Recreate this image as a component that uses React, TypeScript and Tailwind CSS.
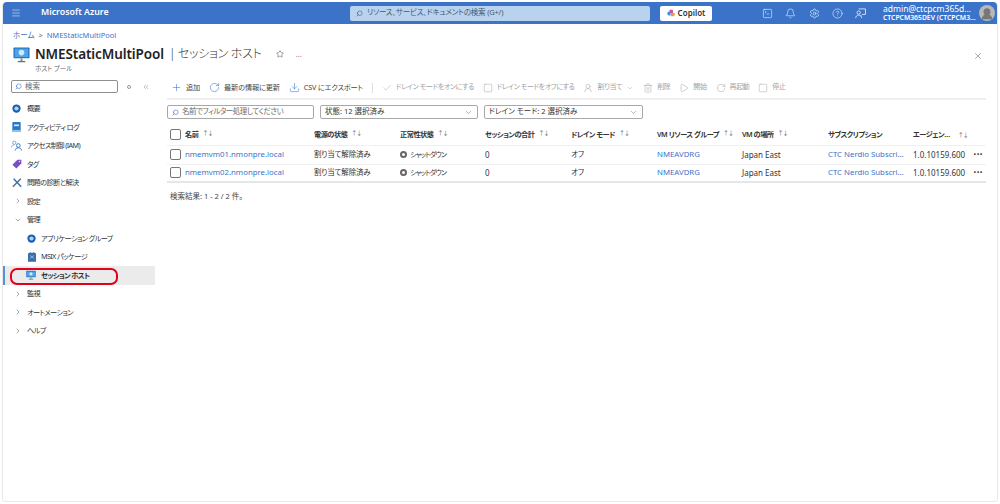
import { Bell, Check, ChevronDown, ChevronRight, ChevronsLeft, CircleHelp, Download, Menu, Play, Plus, RotateCw, Search, Settings, Square, SquareTerminal, Star, Trash2, UserRound, X } from 'lucide-react';
import * as React from 'react';

const FONT = "font-['Noto_Sans','Noto_Sans_CJK_JP',sans-serif] [font-feature-settings:'palt']";

function MonitorIcon({ big }: { big?: boolean }) {
  const size = big ? 'h-[17px] w-[17px]' : 'h-[10px] w-[10px]';
  return (
    <svg viewBox="0 0 18 18" className={size}>
      <rect x="0.5" y="1.5" width="17" height="11.5" rx="0.8" fill="#1f73c9" />
      <rect x="1.8" y="2.8" width="14.4" height="9" fill="#4da3e8" />
      <circle cx="9" cy="7" r="3" fill="#cfeafc" />
      <rect x="8" y="13" width="2" height="3" fill="#8a8a8a" />
      <rect x="5" y="15.8" width="8" height="1.4" fill="#6f6f6f" />
    </svg>
  );
}

function RingIcon({ color }: { color: string }) {
  return (
    <svg viewBox="0 0 12 12" className="h-[9px] w-[9px]">
      <circle cx="6" cy="6" r="5.5" fill={color} />
      <circle cx="6" cy="6" r="2.8" fill="#a8d8f5" />
    </svg>
  );
}

function SideIcon({ name }: { name: string }) {
  if (name === 'overview') return <RingIcon color="#1b5fb0" />;
  if (name === 'log') {
    return (
      <svg viewBox="0 0 10 12" className="h-[10px] w-[9px]">
        <rect width="10" height="12" rx="1" fill="#2a77c4" />
        <rect x="2" y="3" width="6" height="2" fill="#d7ebfa" />
        <rect y="9.5" width="10" height="2.5" fill="#8fc2ec" />
      </svg>
    );
  }
  if (name === 'iam') {
    return (
      <svg viewBox="0 0 12 12" className="h-[11px] w-[11px]" fill="none" strokeWidth="1">
        <circle cx="3.6" cy="3" r="1.8" stroke="#7f9fc4" />
        <path d="M0.6 8c0-2 1.4-2.8 3-2.8" stroke="#7f9fc4" />
        <circle cx="8" cy="6" r="2" stroke="#2a77c4" />
        <path d="M4.6 11.5c0-2 1.4-3 3.4-3s3.4 1 3.4 3" stroke="#2a77c4" />
      </svg>
    );
  }
  if (name === 'tag') {
    return (
      <svg viewBox="0 0 12 12" className="h-[10px] w-[10px]">
        <path d="M6.5 0.8h4.7v4.7l-6 6-4.7-4.7z" fill="#7a4fc4" />
        <circle cx="9" cy="3" r="0.9" fill="#e6dcf7" />
      </svg>
    );
  }
  if (name === 'tools') {
    return (
      <svg viewBox="0 0 12 12" className="h-[10px] w-[10px]" fill="none">
        <path d="M2 1l9 9.5" stroke="#2a77c4" strokeWidth="1.8" />
        <path d="M10.5 1L1 10.5" stroke="#5b6f86" strokeWidth="1.8" />
      </svg>
    );
  }
  if (name === 'app') return <RingIcon color="#1b5fb0" />;
  if (name === 'msix') {
    return (
      <svg viewBox="0 0 10 12" className="h-[10px] w-[8px]">
        <path d="M0 1.5L3 0l2 1 2-1 3 1.5V12H0z" fill="#3a6ea8" />
        <path d="M2.5 4l5 4M7.5 4l-5 4" stroke="#b8d3ec" strokeWidth="0.8" />
      </svg>
    );
  }
  return <MonitorIcon />;
}

const sideItems: { label: string; icon?: string; chevron?: 'right' | 'down'; child?: boolean; active?: boolean }[] = [
  { label: '概要', icon: 'overview' },
  { label: 'アクティビティ ログ', icon: 'log' },
  { label: 'アクセス制御 (IAM)', icon: 'iam' },
  { label: 'タグ', icon: 'tag' },
  { label: '問題の診断と解決', icon: 'tools' },
  { label: '設定', chevron: 'right' },
  { label: '管理', chevron: 'down' },
  { label: 'アプリケーション グループ', icon: 'app', child: true },
  { label: 'MSIX パッケージ', icon: 'msix', child: true },
  { label: 'セッション ホスト', icon: 'host', child: true, active: true },
  { label: '監視', chevron: 'right' },
  { label: 'オートメーション', chevron: 'right' },
  { label: 'ヘルプ', chevron: 'right' },
];

function Sidebar() {
  return (
    <aside className="w-[152px] shrink-0">
      <div className="flex items-center pl-[8px]">
        <div className="flex h-[13px] w-[107px] items-center gap-[3px] rounded-[2px] border border-[#8f8f8f] px-[3px] text-[7.5px] text-[#6b6b6b]">
          <Search className="h-[7px] w-[7px] scale-x-[-1] text-[#3b73c9]" />
          検索
        </div>
        <span className="ml-[9px] h-[4px] w-[4px] rounded-full border border-[#999]" />
        <ChevronsLeft className="ml-[11px] h-[8px] w-[8px] text-[#888]" strokeWidth={1.5} />
      </div>
      <nav className="mt-[6.5px]">
        {sideItems.map((item) => (
          <div
            key={item.label}
            className={`flex h-[18.5px] items-center text-[7.2px] tracking-[-0.6px] text-[#333] ${item.active ? 'border-l-2 border-[#5b8fd6] bg-[#ebebeb] font-semibold text-[#222]' : ''}`}
          >
            {item.chevron ? (
              <span className="flex w-[24px] justify-end pr-[5px]">
                {item.chevron === 'right' ? (
                  <ChevronRight className="h-[8px] w-[8px] text-[#555]" strokeWidth={1.5} />
                ) : (
                  <ChevronDown className="h-[8px] w-[8px] text-[#555]" strokeWidth={1.5} />
                )}
              </span>
            ) : (
              <span className={`flex ${item.child ? (item.active ? 'w-[31px] justify-end' : 'w-[33px] justify-end') : 'w-[24px] justify-center pl-[6px] pr-[3px]'}`}>
                {item.icon && <SideIcon name={item.icon} />}
              </span>
            )}
            <span className={item.child ? 'ml-[5px]' : ''}>{item.label}</span>
          </div>
        ))}
      </nav>
    </aside>
  );
}

function ToolButton({ icon, label, disabled, caret }: { icon: React.ReactNode; label: string; disabled?: boolean; caret?: boolean }) {
  return (
    <div className={`flex shrink-0 items-center gap-[4px] whitespace-nowrap ${disabled ? 'text-[7px] tracking-[-0.4px] text-[#a3a3a3]' : 'text-[7.2px] tracking-[-0.15px] text-[#444]'}`}>
      {icon}
      {label}
      {caret && <ChevronDown className="h-[8px] w-[8px]" strokeWidth={1.3} />}
    </div>
  );
}

function Toolbar() {
  const blue = 'h-[11px] w-[11px] text-[#2f73c8]';
  const gray = 'h-[10px] w-[10px] text-[#a3a3a3]';
  return (
    <div className="flex h-[20px] items-center border-b-2 border-[#efefef] pb-[3px] pl-[4px]">
      <div className="flex items-center gap-[9px]">
        <ToolButton icon={<Plus className={blue} strokeWidth={1.2} />} label="追加" />
        <ToolButton icon={<RotateCw className={blue} strokeWidth={1.2} />} label="最新の情報に更新" />
        <ToolButton icon={<Download className={blue} strokeWidth={1.2} />} label="CSV にエクスポート" />
        <span className="h-[10px] w-px bg-[#ddd]" />
      </div>
      <div className="ml-[9px] flex items-center gap-[9px]">
        <ToolButton disabled icon={<Check className={gray} strokeWidth={1.2} />} label="ドレイン モードをオンにする" />
        <ToolButton disabled icon={<Square className={gray} strokeWidth={1.2} />} label="ドレイン モードをオフにする" />
        <ToolButton disabled caret icon={<UserRound className={gray} strokeWidth={1.2} />} label="割り当て" />
        <ToolButton disabled icon={<Trash2 className={gray} strokeWidth={1.2} />} label="削除" />
        <ToolButton disabled icon={<Play className={gray} strokeWidth={1.2} />} label="開始" />
        <ToolButton disabled icon={<RotateCw className={gray} strokeWidth={1.2} />} label="再起動" />
        <ToolButton disabled icon={<Square className={gray} strokeWidth={1.2} />} label="停止" />
      </div>
    </div>
  );
}

function Filters() {
  const box = 'flex h-[14px] items-center rounded-[2px] border border-[#a8a8a8] px-[4px] text-[7.5px]';
  return (
    <div className="mt-[5px] flex">
      <div className={`${box} w-[147px] gap-[3px] tracking-[-0.5px] text-[#6b6b6b]`}>
        <Search className="h-[7px] w-[7px] scale-x-[-1] text-[#3b73c9]" />
        名前でフィルター処理してください
      </div>
      <div className={`${box} ml-[6px] w-[158px] justify-between text-[#333]`}>
        状態: 12 選択済み
        <ChevronDown className="h-[9px] w-[9px] text-[#555]" strokeWidth={1.2} />
      </div>
      <div className={`${box} ml-[6px] w-[159px] justify-between text-[#333]`}>
        ドレイン モード: 2 選択済み
        <ChevronDown className="h-[9px] w-[9px] text-[#555]" strokeWidth={1.2} />
      </div>
    </div>
  );
}

const GRID = 'grid grid-cols-[147px_86px_85px_86px_86px_85px_86px_85px_74px] items-center';

function Sort() {
  return <span className="ml-[4px] text-[6px] font-normal tracking-[-1px] text-[#666]">↑↓</span>;
}

function Head({ label, sort = true }: { label: string; sort?: boolean }) {
  return (
    <div className="flex items-center whitespace-nowrap">
      {label}
      {sort && <Sort />}
    </div>
  );
}

function CheckBox() {
  return <span className="ml-[3px] mr-[4px] h-[11px] w-[11px] shrink-0 rounded-[2px] border border-[#777]" />;
}

const LINK = 'text-[#3b73c9] text-[7.8px]';

function Row({ name, last }: { name: string; last?: boolean }) {
  return (
    <div className={`${GRID} h-[18.5px] whitespace-nowrap border-b text-[7.5px] text-[#333] ${last ? 'border-b-2 border-[#e6e6e6]' : 'border-[#f0f0f0]'}`}>
      <div className="flex items-center">
        <CheckBox />
        <span className={LINK}>{name}</span>
      </div>
      <div className="tracking-[-0.2px]">割り当て解除済み</div>
      <div className="flex items-center gap-[3px] text-[7px] tracking-[-0.8px]">
        <span className="h-[7px] w-[7px] rounded-full border-2 border-[#666]" />
        シャットダウン
      </div>
      <div className="text-[8px]">0</div>
      <div>オフ</div>
      <div className={LINK}>NMEAVDRG</div>
      <div className="text-[8px]">Japan East</div>
      <div className={LINK}>CTC Nerdio Subscri…</div>
      <div className="flex items-center justify-between pr-[4px] text-[8px]">
        1.0.10159.600
        <span className="text-[7px] tracking-[0.5px] text-[#333]">•••</span>
      </div>
    </div>
  );
}

function HostTable() {
  return (
    <div className="mt-[4px]">
      <div className={`${GRID} h-[23px] border-b border-[#f0f0f0] text-[7.2px] font-semibold tracking-[-0.5px] text-[#333]`}>
        <div className="flex items-center">
          <CheckBox />
          <Head label="名前" />
        </div>
        <Head label="電源の状態" />
        <Head label="正常性状態" />
        <Head label="セッションの合計" />
        <Head label="ドレイン モード" />
        <Head label="VM リソース グループ" />
        <Head label="VM の場所" />
        <Head label="サブスクリプション" sort={false} />
        <div className="flex items-center whitespace-nowrap">
          エージェン…
          <span className="ml-[4px]"><Sort /></span>
        </div>
      </div>
      <Row name="nmemvm01.nmonpre.local" />
      <Row name="nmemvm02.nmonpre.local" last />
      <p className="mt-[8px] pl-[3px] text-[7.5px] text-[#444]">検索結果: 1 - 2 / 2 件。</p>
    </div>
  );
}

function TopBar() {
  const icon = 'h-[11px] w-[11px] text-white';
  return (
    <header className="flex h-[22px] shrink-0 items-center rounded-t-[4px] bg-[#3b73c9] text-white">
      <Menu className="ml-[8px] h-[10px] w-[10px]" strokeWidth={1.2} />
      <span className="ml-[20px] w-[309px] whitespace-nowrap text-[8.8px] font-semibold">Microsoft Azure</span>
      <div className="flex h-[15px] w-[300px] items-center gap-[4px] rounded-[2px] bg-[#b9d3ef] px-[6px] text-[7.5px] tracking-[-0.2px] text-[#46586e]">
        <Search className="h-[7px] w-[7px] scale-x-[-1]" />
        リソース、サービス、ドキュメントの検索 (G+/)
      </div>
      <div className="ml-[10px] flex h-[15px] w-[52px] items-center justify-center gap-[3px] rounded-[2px] bg-white text-[8px] font-semibold text-[#333]">
        <svg viewBox="0 0 10 10" className="h-[8px] w-[8px]">
          <path d="M0.5 5a2 2 0 012-2h2v5h-2a2 2 0 01-2-2z" fill="#3b8fe0" />
          <path d="M3 0.8h3a1.5 1.5 0 011.5 1.5V5h-4z" fill="#d04fa0" />
          <path d="M5 5h4.5v1.5A2 2 0 017.5 9H5z" fill="#f0a030" />
        </svg>
        Copilot
      </div>
      <div className="ml-[50px] flex w-[104px] items-center justify-between">
        <SquareTerminal className={icon} strokeWidth={1.2} />
        <Bell className={icon} strokeWidth={1.2} />
        <Settings className={icon} strokeWidth={1.2} />
        <CircleHelp className={icon} strokeWidth={1.2} />
        <svg viewBox="0 0 12 12" className={icon} fill="none" stroke="currentColor" strokeWidth="0.8">
          <circle cx="4" cy="5" r="1.8" />
          <path d="M0.8 11c0-2 1.4-3.2 3.2-3.2s3.2 1.2 3.2 3.2" />
          <path d="M4 1h7.4v6H8l-1.4 1.4" />
        </svg>
      </div>
      <div className="ml-[17px] w-[94px] whitespace-nowrap leading-[9px]">
        <div className="text-[8.5px]">admin@ctcpcm365d…</div>
        <div className="text-[6.8px] font-semibold">CTCPCM365DEV (CTCPCM3…</div>
      </div>
      <div className="ml-[2px] flex h-[16px] w-[16px] items-end justify-center overflow-hidden rounded-full bg-[#b8b8b8]">
        <UserRound className="h-[14px] w-[14px] text-[#777]" fill="#777" />
      </div>
    </header>
  );
}

export default function App(): React.ReactElement {
  return (
    <div className={`${FONT} relative h-[504px] w-[1000px] overflow-hidden bg-white p-[2px]`}>
      <div className="flex h-full flex-col rounded-[4px] border-b border-r border-l border-[#e8e8e8]">
        <TopBar />
        <p className="mt-[5px] pl-[10px] text-[7.5px] leading-[12px] text-[#3b73c9]">
          ホーム <span className="px-[2px] text-[#666]">&gt;</span> NMEStaticMultiPool
        </p>
        <div className="mt-[2px] flex items-start pl-[10px] pr-[13px]">
          <div className="mt-[3px]"><MonitorIcon big /></div>
          <div className="ml-[5px]">
            <div className="flex h-[22px] items-center whitespace-nowrap">
              <h1 className="text-[13.5px] font-semibold tracking-[-0.1px] text-[#222]">NMEStaticMultiPool</h1>
              <span className="ml-[5px] text-[12px] font-light tracking-[-0.3px] text-[#333]">| セッション ホスト</span>
              <Star className="ml-[14px] h-[8px] w-[8px] text-[#444]" strokeWidth={1.5} />
              <span className="ml-[12px] text-[8px] tracking-[0.5px] text-[#888]">…</span>
            </div>
            <p className="-mt-[1px] text-[6.5px] leading-[9px] text-[#666]">ホスト プール</p>
          </div>
          <X className="ml-auto mr-[1px] mt-[8px] h-[10px] w-[10px] text-[#555]" strokeWidth={1.2} />
        </div>
        <div className="mt-[7px] flex min-h-0 flex-1 pr-[11px]">
          <Sidebar />
          <main className="ml-[12px] min-w-0 flex-1">
            <Toolbar />
            <Filters />
            <HostTable />
          </main>
        </div>
      </div>
      {/* red hand-drawn highlight around the session host item */}
      <div className="absolute left-[10px] top-[268px] h-[17px] w-[108px] rounded-[7px] border-2 border-[#e3001b]" />
    </div>
  );
}
